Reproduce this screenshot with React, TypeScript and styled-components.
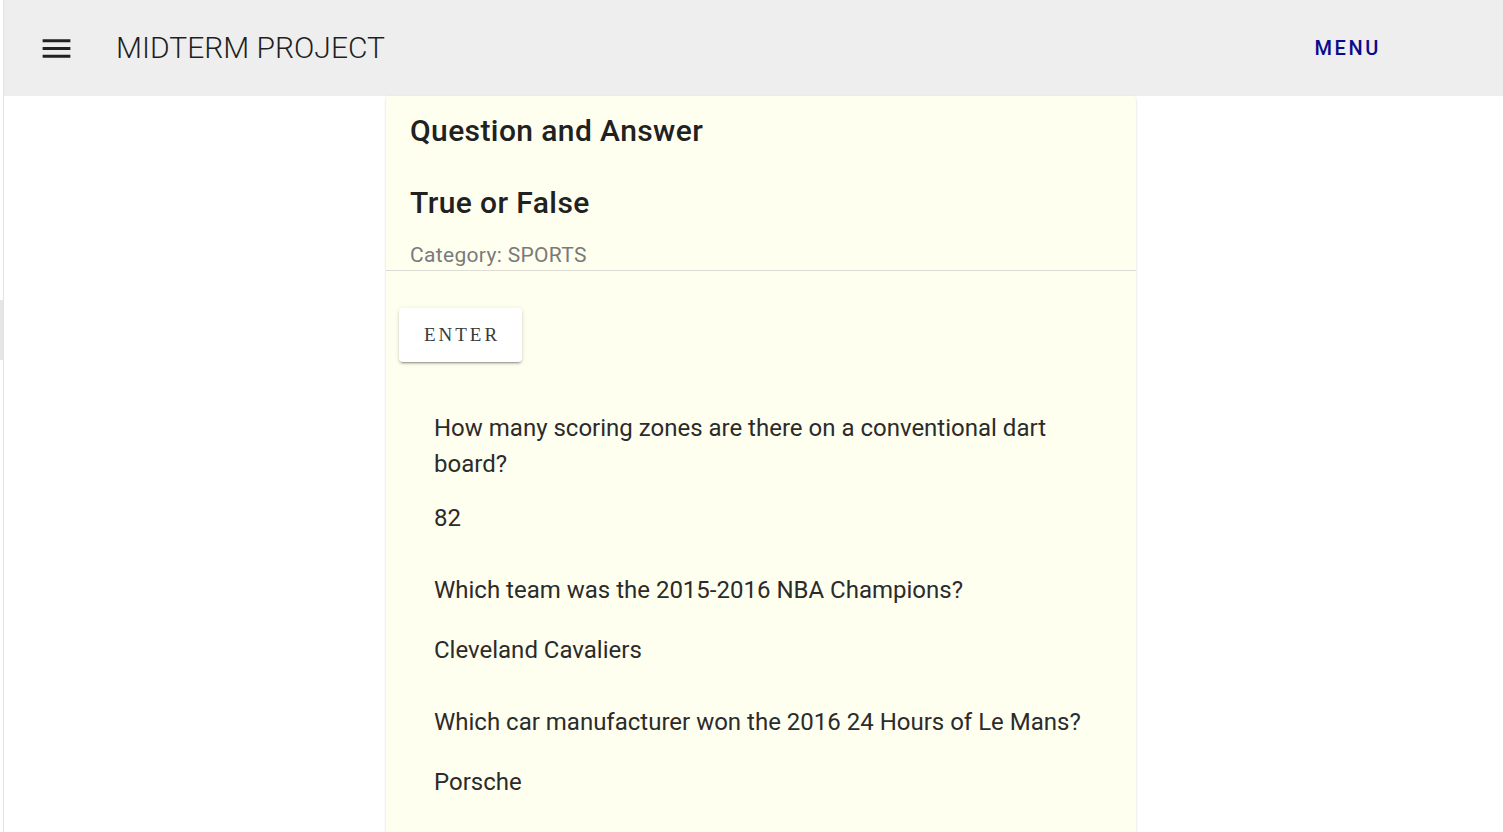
import React from "react";
import styled, { createGlobalStyle } from "styled-components";

const GlobalStyle = createGlobalStyle`
  html, body { margin: 0; padding: 0; background: #ffffff; }
  body { font-family: Roboto, "Noto Sans", Arial, sans-serif; overflow: hidden; }
  * { box-sizing: border-box; }
`;

const Page = styled.div`
  display: flex;
  min-height: 100vh;
  background: #ffffff;
`;

const Rail = styled.div`
  width: 4px;
  flex-shrink: 0;
  display: flex;
  flex-direction: column;
  border-right: 1px solid #e3e3e3;
`;

const RailTab = styled.div`
  margin-top: 300px;
  height: 60px;
  width: 3px;
  background: #e6e6e6;
`;

const Main = styled.div`
  flex: 1;
  display: flex;
  flex-direction: column;
  min-width: 0;
`;

const Header = styled.header`
  height: 96px;
  background: #eeeeee;
  display: flex;
  align-items: center;
  padding: 0 122px 0 34px;
`;

const IconButton = styled.button`
  border: 0;
  background: transparent;
  padding: 0;
  display: flex;
  color: #222;
  cursor: pointer;
`;

const Brand = styled.h1`
  margin: 0 0 2px 41px;
  font-family: Roboto, sans-serif;
  font-weight: 300;
  font-size: 30px;
  color: #1f1f1f;
  flex: 1;
`;

const MenuButton = styled.button`
  border: 0;
  background: transparent;
  padding: 0;
  font-family: Roboto, sans-serif;
  font-weight: 500;
  font-size: 20px;
  letter-spacing: 2.6px;
  color: #0a0a8c;
  text-transform: uppercase;
  cursor: pointer;
`;

const Content = styled.main`
  padding-left: 382px;
`;

const Card = styled.section`
  width: 750px;
  background: #fffff0;
  border-radius: 4px;
  box-shadow: 0 2px 1px -1px rgba(0, 0, 0, 0.2), 0 1px 1px 0 rgba(0, 0, 0, 0.14),
    0 1px 3px 0 rgba(0, 0, 0, 0.12);
  padding-bottom: 60px;
`;

const CardHead = styled.div`
  padding: 17px 24px 3px;
  border-bottom: 1px solid #dcdcd4;
`;

const Heading = styled.h2<{ $gap: number }>`
  margin: 0 0 ${(p) => p.$gap}px;
  font-size: 30px;
  line-height: 36px;
  letter-spacing: 0.4px;
  font-weight: 500;
  color: #212121;
`;

const Category = styled.div`
  font-size: 21px;
  line-height: 24px;
  letter-spacing: 0.33px;
  color: #7a7a7a;
`;

const CardBody = styled.div`
  padding: 37px 13px 0;
`;

const EnterButton = styled.button`
  width: 123px;
  height: 54px;
  border: 0;
  border-radius: 4px;
  background: #ffffff;
  box-shadow: 0 3px 1px -2px rgba(0, 0, 0, 0.2), 0 2px 2px 0 rgba(0, 0, 0, 0.14),
    0 1px 5px 0 rgba(0, 0, 0, 0.12);
  font-family: "Liberation Serif", "Times New Roman", serif;
  font-size: 19px;
  letter-spacing: 3px;
  color: #3a3a3a;
  padding: 0 0 0 3px;
  cursor: pointer;
`;

const QAList = styled.div`
  padding: 48px 35px 0 35px;
  display: flex;
  flex-direction: column;
  gap: 36px;
`;

const QAItem = styled.div`
  display: flex;
  flex-direction: column;
`;

const Text = styled.p<{ $gap?: number }>`
  margin: 0 0 ${(p) => p.$gap ?? 0}px;
  font-size: 24px;
  line-height: 36px;
  color: #2b2b2b;
`;

const items = [
  {
    q: "How many scoring zones are there on a conventional dart board?",
    a: "82",
    gap: 18,
  },
  { q: "Which team was the 2015-2016 NBA Champions?", a: "Cleveland Cavaliers", gap: 24 },
  {
    q: "Which car manufacturer won the 2016 24 Hours of Le Mans?",
    a: "Porsche",
    gap: 24,
  },
];

export default function App() {
  return (
    <>
      <GlobalStyle />
      <Page>
        <Rail>
          <RailTab />
        </Rail>
        <Main>
          <Header>
            <IconButton aria-label="menu">
              <svg width="37" height="37" viewBox="0 0 24 24" fill="currentColor">
                <path d="M3 18h18v-2H3v2zm0-5h18v-2H3v2zm0-7v2h18V6H3z" />
              </svg>
            </IconButton>
            <Brand>MIDTERM PROJECT</Brand>
            <MenuButton>Menu</MenuButton>
          </Header>
          <Content>
            <Card>
              <CardHead>
                <Heading $gap={36}>Question and Answer</Heading>
                <Heading $gap={22}>True or False</Heading>
                <Category>Category: SPORTS</Category>
              </CardHead>
              <CardBody>
                <EnterButton>ENTER</EnterButton>
                <QAList>
                  {items.map((it) => (
                    <QAItem key={it.q}>
                      <Text $gap={it.gap}>{it.q}</Text>
                      <Text>{it.a}</Text>
                    </QAItem>
                  ))}
                </QAList>
              </CardBody>
            </Card>
          </Content>
        </Main>
      </Page>
    </>
  );
}
